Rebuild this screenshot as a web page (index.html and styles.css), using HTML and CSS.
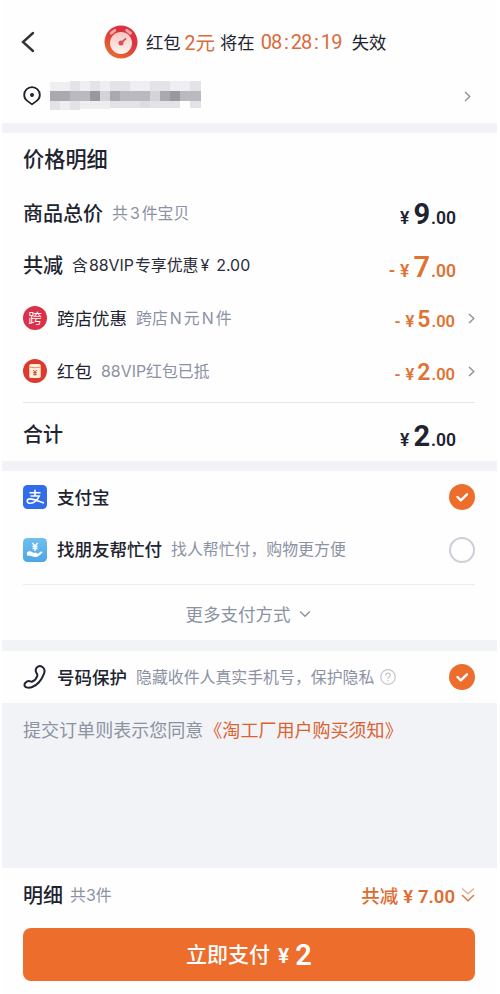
FILE: index.html
```html
<!DOCTYPE html>
<html lang="zh-CN">
<head>
  <meta charset="UTF-8" />
  <meta name="viewport" content="width=device-width, initial-scale=1.0" />
  <title>确认订单</title>
  <link rel="stylesheet" href="styles.css">
</head>
<body>
  <div class="page">
    <header class="top-bar">
      <svg class="back" width="14" height="22" viewBox="0 0 14 22"><path d="M12 2 2 11l10 9" /></svg>
      <div class="countdown">
        <svg class="timer" width="34" height="34" viewBox="0 0 34 34">
          <defs>
            <linearGradient id="timer-bg" x1="0.8" y1="0" x2="0.2" y2="1">
              <stop offset="0.35" stop-color="#da3442" />
              <stop offset="1" stop-color="#e8702c" />
            </linearGradient>
            <linearGradient id="timer-face" x1="0" y1="0" x2="0" y2="1">
              <stop offset="0" stop-color="#f5c6c2" />
              <stop offset="1" stop-color="#fff4ef" />
            </linearGradient>
          </defs>
          <circle cx="17" cy="17" r="16.5" fill="url(#timer-bg)" />
          <path d="m7.3 8.2 3.5-2.8M22.8 5.4l3.7 2.8" stroke="#f4a4a2" stroke-width="3" stroke-linecap="round" />
          <circle cx="17" cy="18" r="11" fill="url(#timer-face)" />
          <circle cx="17" cy="18" r="2.5" fill="#d6505a" />
          <path d="m17 18 4.5-4.2" stroke="#d6505a" stroke-width="1.8" stroke-linecap="round" />
        </svg>
        <span class="c-label">红包</span>
        <span class="c-amount">2元</span>
        <span class="c-label">将在</span>
        <span class="c-time">08<i>:</i>28<i>:</i>19</span>
        <span class="c-label">失效</span>
      </div>
    </header>

    <div class="address">
      <svg width="18" height="20" viewBox="0 0 18 20">
        <path d="M9 18.4 4.3 14.9C2.2 13.3 1.2 11.3 1.2 9a7.8 7.8 0 0 1 15.6 0c0 2.3-1 4.3-3.1 5.9z" fill="none" stroke="#20232c" stroke-width="1.8" stroke-linejoin="round" />
        <circle cx="9" cy="9" r="2" fill="#20232c" />
      </svg>
      <svg class="mosaic" width="151" height="30" viewBox="0 0 151 30" shape-rendering="crispEdges">
        <path fill="#efeff2" d="M0 1h20v9H0zM30 0h10v10H30zM50 0h10v10H50zM80 0h20v10H80zM120 0h20v10h-20z" />
        <path fill="#e4e4e8" d="M20 0h10v10H20zM40 0h10v10H40zM60 0h20v10H60zM100 0h20v10h-20zM140 0h11v10h-11z" />
        <path fill="#b9b9bf" d="M0 10h151v10H0z" />
        <path fill="#a9a9b0" d="M0 10h20v10H0zM60 10h10v10H60zM110 10h10v10h-10z" />
        <path fill="#98989f" d="M40 10h10v10H40zM120 10h10v10h-10z" />
        <path fill="#d3d3d8" d="M50 10h10v10H50zM100 10h10v10h-10z" />
        <path fill="#e3e3e7" d="M0 20h10v9H0zM20 20h10v9H20zM60 20h30v7H60zM100 20h30v7h-30zM140 20h11v7h-11z" />
        <path fill="#eeeef1" d="M10 20h10v9H10zM30 20h30v8H30z" />
        <path fill="#dcdce1" d="M90 20h10v7H90z" />
      </svg>
      <svg class="arrow" width="7" height="11" viewBox="0 0 7 11"><path d="m1 1 4.8 4.5L1 10" /></svg>
    </div>

    <section class="prices">
      <h2>价格明细</h2>
      <div class="row">
        <span class="name">商品总价</span>
        <span class="sub count">共<b>3</b>件宝贝</span>
        <span class="price big">¥<strong>9</strong><em>.00</em></span>
      </div>
      <div class="row">
        <span class="name">共减</span>
        <span class="sub vip">含<b>88VIP</b>专享优惠<b class="yen">¥</b><b>2.00</b></span>
        <span class="price big minus"><i>-</i>¥<strong>7</strong><em>.00</em></span>
      </div>
      <div class="row">
        <svg class="icon" width="24" height="24" viewBox="0 0 24 24">
          <circle cx="12" cy="12" r="12" fill="#db3049" />
          <text class="kua" x="12" y="16.8" text-anchor="middle">跨</text>
        </svg>
        <span class="name small light">跨店优惠</span>
        <span class="sub cross">跨店<b>N</b>元<b>N</b>件</span>
        <span class="price mid minus"><i>-</i>¥<strong>5</strong><em>.00</em></span>
        <svg class="arrow" width="7" height="11" viewBox="0 0 7 11"><path d="m1 1 4.8 4.5L1 10" /></svg>
      </div>
      <div class="row">
        <svg class="icon" width="24" height="24" viewBox="0 0 24 24">
          <circle cx="12" cy="12" r="12" fill="#dc3a31" />
          <rect x="6.3" y="5" width="11.4" height="14" rx="1.5" fill="#fff0dc" />
          <path d="M6.3 8q5.7 1.6 11.4 0" fill="none" stroke="#e58b65" />
          <path d="m10.2 11 1.8 2.2 1.8-2.2M12 13v3.8M10.2 13.7h3.6M10.2 15.3h3.6" fill="none" stroke="#cf4536" stroke-width="1" />
        </svg>
        <span class="name small light">红包</span>
        <span class="sub packet"><b>88VIP</b>红包已抵</span>
        <span class="price mid minus"><i>-</i>¥<strong>2</strong><em>.00</em></span>
        <svg class="arrow" width="7" height="11" viewBox="0 0 7 11"><path d="m1 1 4.8 4.5L1 10" /></svg>
      </div>
      <div class="row total">
        <span class="name">合计</span>
        <span class="price big">¥<strong>2</strong><em>.00</em></span>
      </div>
    </section>

    <section class="payment">
      <div class="row">
        <svg class="icon" width="24" height="24" viewBox="0 0 24 24">
          <rect width="24" height="24" rx="4.5" fill="#336cea" />
          <path d="M6.500 7.700h11M12 4.800v6.200M7.500 11h8.700c-1.500 4-5.200 7.300-8.900 7.300-4.300 0-3.800-4.400-.2-4.400 3.700 0 7.400 2.300 13.900 4.100" fill="none" stroke="#fff" stroke-width="1.600" />
        </svg>
        <span class="name small">支付宝</span>
        <svg class="check" width="26" height="26" viewBox="0 0 26 26"><circle cx="13" cy="13" r="13" /><path d="m8.5 13 3.3 3.3 6.2-6" /></svg>
      </div>
      <div class="row">
        <svg class="icon" width="24" height="24" viewBox="0 0 24 24">
          <defs>
            <linearGradient id="friend-bg" x1="0" y1="0" x2="0" y2="1">
              <stop offset="0" stop-color="#6fc0ee" />
              <stop offset="1" stop-color="#4fa5e4" />
            </linearGradient>
          </defs>
          <rect width="24" height="24" rx="4.5" fill="url(#friend-bg)" />
          <path d="m9.300 5 2.700 3 2.700-3M12 8v5M9.500 8.500h5M9.500 10.500h5" fill="none" stroke="#fff" stroke-width="1.400" />
          <path d="M4 14.200c2-1.500 4.200-.8 6 .5h3.500c1 0 1 1.200 0 1.200h-2.700 3.400l3.800-2.300c1.300-.6 2.200.6 1.200 1.500l-3.900 3.200c-2.100 1.200-5.500.5-7.800-.6L4 17.500z" fill="#fff" />
        </svg>
        <span class="name small">找朋友帮忙付</span>
        <span class="sub">找人帮忙付，购物更方便</span>
        <span class="radio"></span>
      </div>
      <div class="more">
        <span>更多支付方式</span>
        <svg width="12" height="8" viewBox="0 0 12 8"><path d="m1.2 1.5 4.8 4.7 4.8-4.7" /></svg>
      </div>
    </section>

    <section class="protect">
      <div class="row">
        <svg class="icon" width="24" height="24" viewBox="0 0 24 24">
          <path d="M13.300 3.200c1.500-2.100 4-2.600 6.100-1.200 2 1.300 2.700 4 1.500 6.800-2.300 6.100-6.200 11-11.700 13.200-3.100 1.300-6.600.7-7.500-1-.9-1.900 1.200-4.600 3.900-4.900 1.800-.1 2.200 1 3.700.4 2.400-1 4.300-3.400 5-5.800.3-1.400-.5-2-1.100-3.300-.7-1.500-.7-2.900.1-4.200z" fill="none" stroke="#20232f" stroke-width="2" stroke-linejoin="round" />
        </svg>
        <span class="name small">号码保护</span>
        <span class="sub hide">隐藏收件人真实手机号，保护隐私</span>
        <svg class="help" width="16" height="16" viewBox="0 0 16 16"><circle cx="8" cy="8" r="7.3" /><path d="M5.7 6.4c0-3.2 4.7-3 4.7-.3C10.400 7.800 8 7.700 8 9.800M8 11.100v1.300" /></svg>
        <svg class="check" width="26" height="26" viewBox="0 0 26 26"><circle cx="13" cy="13" r="13" /><path d="m8.5 13 3.3 3.3 6.2-6" /></svg>
      </div>
    </section>

    <p class="notice">提交订单则表示您同意<a>《淘工厂用户购买须知》</a></p>

    <footer class="submit">
      <div class="summary">
        <span class="name">明细</span>
        <span class="sub pieces">共<b>3</b>件</span>
        <span class="saved">共减<b class="yen">¥</b><b>7.00</b></span>
        <svg class="double" width="14" height="16" viewBox="0 0 14 16"><path d="m1 1.500 6 5.200 6-5.200" opacity="0.6" /><path d="m1 8 6 5.800L13 8" /></svg>
      </div>
      <button class="pay"><span>立即支付</span><b class="yen">¥</b><b class="num">2</b></button>
    </footer>
  </div>
</body>
</html>
```
FILE: styles.css
```css
* {
  box-sizing: border-box;
}
body {
  margin: 0;
  background: #fff;
  font-family: "Liberation Sans", "Noto Sans CJK SC", sans-serif;
  color: #20232f;
}
svg {
  flex: none;
  display: block;
}
b, i, em {
  font-weight: inherit;
  font-style: normal;
}
.page {
  width: 495px;
  height: 994px;
  margin-left: 2px;
  display: flex;
  flex-direction: column;
  background: #f2f3f7;
  white-space: nowrap;
}

/* top bar and countdown */
.top-bar {
  height: 69px;
  padding: 15px 21px 0 19px;
  display: flex;
  align-items: center;
  background: #fefefe;
}
.back path {
  fill: none;
  stroke: #333;
  stroke-width: 2.4;
  stroke-linecap: round;
}
.countdown {
  display: flex;
  align-items: center;
  margin-left: 69px;
  font-size: 17.3px;
}
.timer {
  margin-right: 8px;
}
.c-label {
  padding-bottom: 2px;
}
.c-amount {
  margin: 0 5px 0 4px;
  padding-bottom: 2px;
  font-family: Roboto, "Noto Sans CJK SC", sans-serif;
  font-size: 19.5px;
  color: #d96c3c;
}
.c-time {
  margin: 0 10px 0 6px;
  font-family: Roboto, sans-serif;
  font-size: 20px;
  color: #d96c3c;
  display: flex;
  width: 81px;
  justify-content: space-between;
  letter-spacing: -0.8px;
}
.address {
  height: 54px;
  padding: 0 26px 0 21px;
  display: flex;
  align-items: center;
  background: #fefefe;
}
.mosaic {
  margin-left: 9px;
}
.arrow {
  margin-left: auto;
}
.arrow path {
  fill: none;
  stroke: #8d8e94;
  stroke-width: 1.3;
}

/* white blocks */
.prices, .payment, .protect {
  background: #fefefe;
  padding: 0 22px 0 21px;
}
.prices {
  margin-top: 10px;
  height: 328px;
}
.prices h2 {
  margin: 0;
  height: 54px;
  line-height: 54px;
  font-size: 21.2px;
  font-weight: 500;
}
.row {
  display: flex;
  align-items: center;
  height: 52.6px;
}
.name, .sub {
  padding-bottom: 2px;
}
.name {
  font-size: 20px;
  font-weight: 500;
}
.icon + .name {
  margin-left: 10px;
}
.name.small {
  font-size: 17.5px;
}
.name.light {
  font-weight: 400;
}
.sub {
  margin-left: 9px;
  font-size: 15.9px;
  color: #8b92a3;
}
.sub b {
  font-family: Inter, sans-serif;
}
.count b {
  margin: 0 2px;
}
.cross b {
  margin: 0 2px;
}
.vip {
  color: #292c38;
}
.vip b {
  margin: 0 1px;
}
.vip .yen {
  margin: 0 6px 0 2px;
}
.kua {
  font-family: "Noto Sans CJK SC", sans-serif;
  font-size: 13.5px;
  fill: #fff;
}

/* amounts */
.price {
  margin-left: auto;
  margin-right: 19px;
  padding-top: 2px;
  display: flex;
  align-items: baseline;
  font-family: Roboto, sans-serif;
  font-weight: 600;
  font-size: 17.5px;
}
.price + .arrow {
  margin-left: -6px;
}
.price strong {
  margin: 0 1px 0 4px;
  font-size: 29px;
  font-weight: 700;
}
.price i {
  margin-right: 5px;
}
.price.mid {
  font-size: 16.5px;
}
.price.mid strong {
  margin-left: 3px;
  font-size: 23px;
}
.minus {
  color: #df7334;
}
.minus strong {
  font-weight: 600;
}
.total {
  height: 59px;
  margin-top: 5px;
  padding-top: 5px;
  border-top: 1px solid #e6e6ea;
}

.payment {
  margin-top: 10px;
  height: 169px;
}
.check {
  margin-left: auto;
}
.check circle {
  fill: #ec6d2c;
}
.check path {
  fill: none;
  stroke: #fff;
  stroke-width: 2.4;
  stroke-linecap: round;
  stroke-linejoin: round;
}
.radio {
  width: 26px;
  height: 26px;
  margin-left: auto;
  border: 2px solid #cdcfd8;
  border-radius: 50%;
}
.more {
  height: 56px;
  margin-top: 8px;
  padding-top: 2px;
  border-top: 1px solid #ececf0;
  display: flex;
  align-items: center;
  justify-content: center;
  gap: 8px;
  font-size: 17.5px;
  color: #8b92a3;
}
.more span {
  padding-bottom: 1px;
}
.more path {
  fill: none;
  stroke: #8b92a3;
  stroke-width: 1.4;
}
.more svg {
  margin-right: 2px;
}
.protect {
  margin-top: 11px;
  height: 52px;
}
.help {
  margin-left: 6px;
  fill: none;
  stroke: #c4c5cb;
  stroke-width: 1.2;
}
.notice {
  margin: 0;
  padding: 2px 0 0 21px;
  line-height: 53px;
  font-size: 18.05px;
  color: #8b92a3;
}
.notice a {
  margin-left: 1px;
  color: #d9622f;
}

/* bottom bar */
.submit {
  margin-top: auto;
  height: 126px;
  padding: 0 22px 0 21px;
  background: #fefefe;
}
.summary {
  height: 60px;
  padding-bottom: 6px;
  display: flex;
  align-items: center;
}
.pieces {
  margin-left: 7px;
}
.saved {
  margin-left: auto;
  margin-right: 6px;
  font-size: 18.5px;
  font-weight: 500;
  color: #dd6c31;
}
.saved b {
  font-family: Roboto, sans-serif;
  font-weight: 600;
}
.saved .yen {
  margin: 0 5px;
}
.double path {
  fill: none;
  stroke: #dc793f;
  stroke-width: 1.4;
}
.pay {
  width: 100%;
  height: 53px;
  padding: 0;
  border: 0;
  border-radius: 8px;
  display: flex;
  align-items: center;
  justify-content: center;
  background: #ec6d2c;
  color: #fff;
  font-family: inherit;
  font-size: 21px;
  font-weight: 500;
}
.pay span {
  padding-bottom: 3px;
}
.pay b {
  font-family: Roboto, sans-serif;
  font-weight: 600;
}
.pay .yen {
  margin: 2px 6px 0 8px;
}
.pay .num {
  font-size: 29px;
}
```
